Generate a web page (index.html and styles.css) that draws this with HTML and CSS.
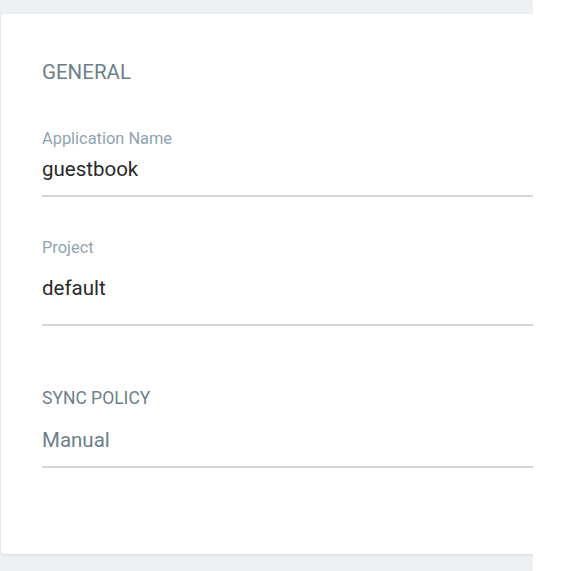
FILE: index.html
```html
<!DOCTYPE html>
<html>
<head>
<meta charset="utf-8">
<link rel="stylesheet" href="styles.css">
</head>
<body>
<div class="page">
  <div class="card">
    <div class="section-title">GENERAL</div>
    <div class="field field-app">
      <div class="label">Application Name</div>
      <div class="value value-app">guestbook</div>
    </div>
    <div class="field field-project">
      <div class="label">Project</div>
      <div class="value value-project">default</div>
    </div>
    <div class="field field-sync">
      <div class="label-caps">SYNC POLICY</div>
      <div class="value value-sync">Manual</div>
    </div>
  </div>
</div>
</body>
</html>
```

FILE: styles.css
```css
html, body {
  margin: 0;
  padding: 0;
  background: #ffffff;
}
body {
  font-family: Roboto, "Liberation Sans", sans-serif;
}
.page {
  width: 533px;
  height: 571px;
  box-sizing: border-box;
  background: #eef1f4;
  padding: 14px 0 0 1px;
  overflow: hidden;
}
.card {
  width: 620px;
  height: 540px;
  box-sizing: border-box;
  background: #ffffff;
  border-radius: 4px;
  box-shadow: 0 1px 3px rgba(0, 0, 0, 0.1);
  padding: 46px 0 0 41px;
}
.section-title {
  font-size: 20.5px;
  line-height: 24px;
  color: #6d7f8b;
}
.field {
  border-bottom: 2px solid #d2d4d6;
}
.label {
  font-size: 16.4px;
  line-height: 20px;
  color: #8fa4b1;
}
.label-caps {
  font-size: 17.5px;
  line-height: 20px;
  color: #6d7f8b;
}
.value {
  font-size: 20.5px;
  line-height: 24px;
  color: #2a2a2a;
}
.field-app {
  margin-top: 45px;
}
.value-app {
  margin-top: 8px;
  padding-bottom: 14px;
}
.field-project {
  margin-top: 41px;
}
.value-project {
  margin-top: 18px;
  padding-bottom: 24px;
}
.field-sync {
  margin-top: 62px;
}
.value-sync {
  margin-top: 20px;
  padding-bottom: 14px;
  color: #6d7f8b;
}
```
